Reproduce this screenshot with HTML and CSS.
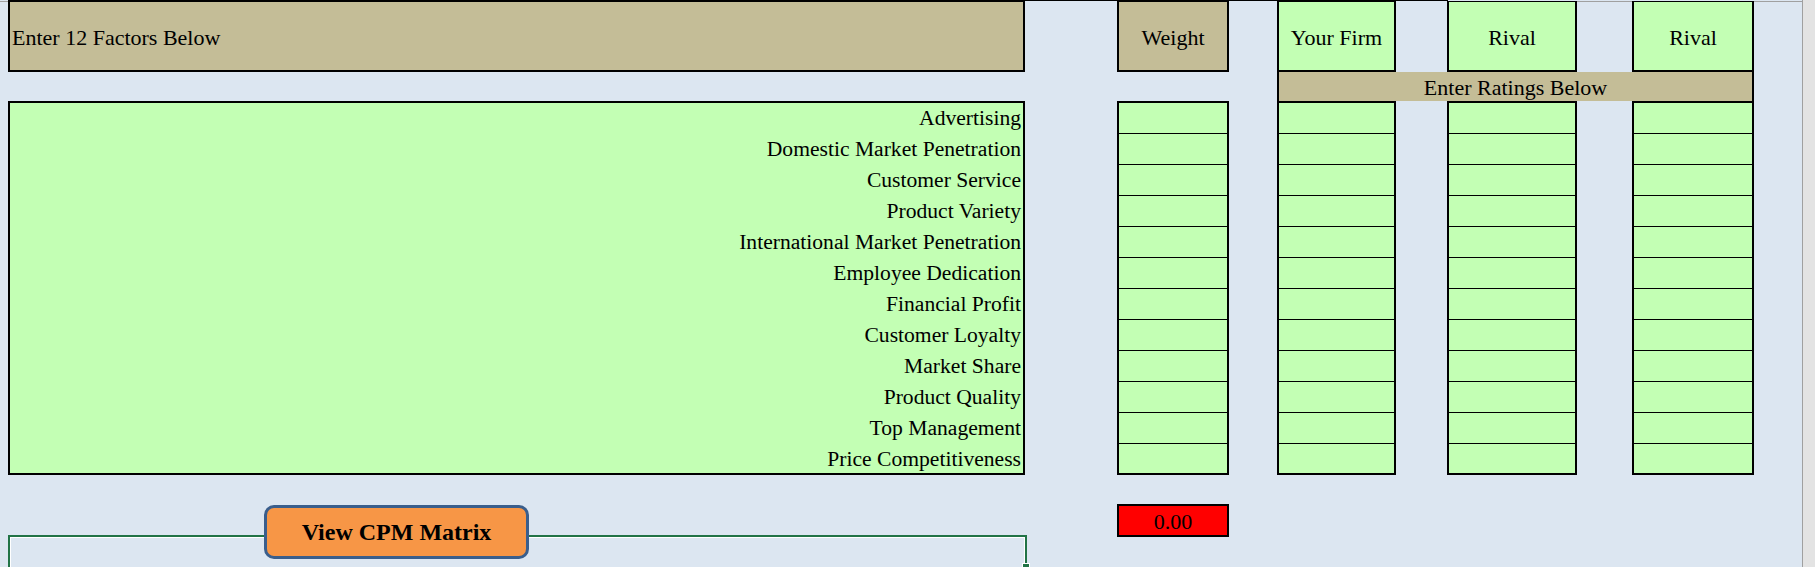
FILE: index.html
```html
<!DOCTYPE html>
<html lang="en">
<head>
<meta charset="utf-8">
<title>CPM Input Sheet</title>
<link rel="stylesheet" href="styles.css">
</head>
<body>
<div class="app">
  <div class="sheet-area">
    <div class="topedge"><span class="te-left"></span><span class="te-mid"></span><span class="te-right"></span></div>
    <div class="grid">
      <div class="hdr hdr-tan hdr-factors">Enter 12 Factors Below</div>
      <div class="hdr hdr-tan hdr-center c-w">Weight</div>
      <div class="hdr hdr-green hdr-center c-yf">Your Firm</div>
      <div class="hdr hdr-green hdr-center c-r1">Rival</div>
      <div class="hdr hdr-green hdr-center c-r2">Rival</div>
      <div class="band">Enter Ratings Below</div>

      <div class="factors">
        <div class="factor">Advertising</div>
        <div class="factor">Domestic Market Penetration</div>
        <div class="factor">Customer Service</div>
        <div class="factor">Product Variety</div>
        <div class="factor">International Market Penetration</div>
        <div class="factor">Employee Dedication</div>
        <div class="factor">Financial Profit</div>
        <div class="factor">Customer Loyalty</div>
        <div class="factor">Market Share</div>
        <div class="factor">Product Quality</div>
        <div class="factor">Top Management</div>
        <div class="factor">Price Competitiveness</div>
      </div>

      <div class="col c-w">
        <div class="cell"></div><div class="cell"></div><div class="cell"></div><div class="cell"></div>
        <div class="cell"></div><div class="cell"></div><div class="cell"></div><div class="cell"></div>
        <div class="cell"></div><div class="cell"></div><div class="cell"></div><div class="cell"></div>
      </div>
      <div class="col c-yf">
        <div class="cell"></div><div class="cell"></div><div class="cell"></div><div class="cell"></div>
        <div class="cell"></div><div class="cell"></div><div class="cell"></div><div class="cell"></div>
        <div class="cell"></div><div class="cell"></div><div class="cell"></div><div class="cell"></div>
      </div>
      <div class="col c-r1">
        <div class="cell"></div><div class="cell"></div><div class="cell"></div><div class="cell"></div>
        <div class="cell"></div><div class="cell"></div><div class="cell"></div><div class="cell"></div>
        <div class="cell"></div><div class="cell"></div><div class="cell"></div><div class="cell"></div>
      </div>
      <div class="col c-r2">
        <div class="cell"></div><div class="cell"></div><div class="cell"></div><div class="cell"></div>
        <div class="cell"></div><div class="cell"></div><div class="cell"></div><div class="cell"></div>
        <div class="cell"></div><div class="cell"></div><div class="cell"></div><div class="cell"></div>
      </div>

      <div class="bottom-left">
        <div class="selection"><span class="fill-handle"></span></div>
        <button class="cpm-button" type="button">View CPM Matrix</button>
      </div>
      <div class="total c-w">0.00</div>
    </div>
  </div>
  <div class="rstrip"></div>
</div>
</body>
</html>
```

FILE: styles.css
```css
html, body {
  margin: 0;
  padding: 0;
  height: 567px;
  overflow: hidden;
  background: #dce6f1;
  font-family: "Liberation Serif", "Times New Roman", serif;
  font-size: 22px;
  color: #000;
}

.app {
  display: flex;
  height: 567px;
}

.sheet-area {
  flex: 1;
  min-width: 0;
}

.rstrip {
  width: 12px;
  border-left: 1px solid #a0a0a0;
  background: #e3e3e3;
}

.topedge {
  display: flex;
  height: 2px;
}
.te-left {
  width: 8px;
  border-bottom: 1px solid #a0a0a0;
  box-sizing: border-box;
}
.te-mid {
  width: 1440px;
  border-top: 1px solid #000;
  box-sizing: border-box;
}
.te-right {
  flex: 1;
  border-bottom: 1px solid #a0a0a0;
  box-sizing: border-box;
}

.grid {
  display: grid;
  margin: -1px 0 0 8px;
  grid-template-columns: 1017px 92px 112px 48px 119px 51px 130px 55px 122px;
  grid-template-rows: 71px 29px 374px auto;
}

.c-w  { grid-column: 3; }
.c-yf { grid-column: 5; }
.c-r1 { grid-column: 7; }
.c-r2 { grid-column: 9; }

.hdr {
  grid-row: 1;
  box-sizing: border-box;
  border: 2px solid #000;
  border-top-width: 1px;
  display: flex;
  align-items: center;
  padding-top: 3px;
}
.hdr-tan { background: #c4bd97; }
.hdr-green { background: #c3ffb4; }
.hdr-center { justify-content: center; }
.hdr-factors {
  grid-column: 1;
  padding-left: 2px;
}

.band {
  grid-row: 2;
  grid-column: 5 / 10;
  background: #c4bd97;
  border-left: 2px solid #000;
  border-right: 2px solid #000;
  display: flex;
  align-items: center;
  justify-content: center;
  padding-top: 3px;
  box-sizing: border-box;
}

.factors {
  grid-row: 3;
  grid-column: 1;
  box-sizing: border-box;
  border: 2px solid #000;
  background: #c3ffb4;
  text-align: right;
  padding-right: 2px;
  overflow: hidden;
  font-size: 21.6px;
}
.factor {
  height: 31px;
  line-height: 31px;
  white-space: nowrap;
}

.col {
  grid-row: 3;
  box-sizing: border-box;
  border: 2px solid #000;
  background: #c3ffb4;
  display: flex;
  flex-direction: column;
}
.cell {
  height: 30px;
  flex: none;
}
.cell + .cell {
  border-top: 1px solid #000;
}

.bottom-left {
  grid-row: 4;
  grid-column: 1 / 3;
  position: relative;
  padding-top: 60px;
}
.selection {
  position: relative;
  box-sizing: border-box;
  width: 1019px;
  height: 34px;
  border: 2px solid #217346;
  border-bottom: none;
  box-shadow: inset 1px 1px 0 #fff, inset -1px 0 0 #fff;
}
.fill-handle {
  position: absolute;
  right: -5px;
  top: 26px;
  width: 6px;
  height: 6px;
  background: #217346;
  border: 1px solid #fff;
}

.cpm-button {
  position: absolute;
  left: 256px;
  top: 30px;
  width: 265px;
  height: 54px;
  box-sizing: border-box;
  background: #f79646;
  border: 3px solid #3a5e8c;
  border-radius: 10px;
  font-family: "Liberation Serif", "Times New Roman", serif;
  font-size: 24px;
  font-weight: bold;
  color: #000;
  padding: 0;
}

.total {
  grid-row: 4;
  margin-top: 29px;
  height: 33px;
  box-sizing: border-box;
  border: 2px solid #000;
  background: #ff0000;
  display: flex;
  align-items: center;
  justify-content: center;
  padding-top: 2px;
}
```
